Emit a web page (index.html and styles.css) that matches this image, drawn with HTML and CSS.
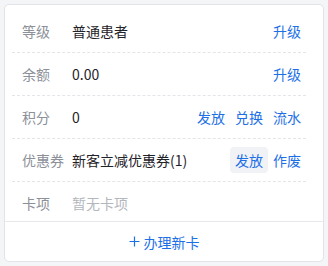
FILE: index.html
```html
<!DOCTYPE html>
<html lang="zh-CN">
<head>
    <meta charset="UTF-8">
    <meta name="viewport" content="width=device-width, initial-scale=1.0">
    <title>会员卡</title>
    <link rel="stylesheet" href="styles.css">
</head>
<body>
    <div class="card">
        <div class="list">
            <div class="row">
                <span class="label">等级</span>
                <span class="value">普通患者</span>
                <div class="actions">
                    <a class="link">升级</a>
                </div>
            </div>
            <div class="row">
                <span class="label">余额</span>
                <span class="value">0.00</span>
                <div class="actions">
                    <a class="link">升级</a>
                </div>
            </div>
            <div class="row">
                <span class="label">积分</span>
                <span class="value">0</span>
                <div class="actions">
                    <a class="link">发放</a>
                    <a class="link">兑换</a>
                    <a class="link">流水</a>
                </div>
            </div>
            <div class="row">
                <span class="label">优惠券</span>
                <span class="value">新客立减优惠券(1)</span>
                <div class="actions">
                    <a class="link active">发放</a>
                    <a class="link">作废</a>
                </div>
            </div>
            <div class="row row-last">
                <span class="label">卡项</span>
                <span class="value empty">暂无卡项</span>
            </div>
        </div>
        <div class="footer">
            <a class="link add">
                <svg width="11" height="11" viewBox="0 0 11 11"><path d="M5.5 0.5v10M0.5 5.5h10" stroke="currentColor" stroke-width="1.2" fill="none"/></svg>
                办理新卡
            </a>
        </div>
    </div>
</body>
</html>
```

FILE: styles.css
```css
body {
    margin: 0;
    padding: 4px;
    background-color: #f4f5f7;
    font-family: "Noto Sans CJK SC", "Noto Sans", sans-serif;
    font-size: 14px;
    color: #1f2329;
}
.card {
    width: 320px;
    height: 258px;
    box-sizing: border-box;
    background: white;
    border: 1px solid #e2e4e9;
    border-radius: 5px;
    display: flex;
    flex-direction: column;
}
.list {
    padding: 5px 17px 0 7px;
    flex: 1;
}
.row {
    display: flex;
    align-items: center;
    height: 43px;
    box-sizing: border-box;
    padding-left: 10px;
    border-bottom: 1px dashed #e3e5e9;
}
.row-last {
    border-bottom: none;
    height: 39px;
    padding-top: 2px;
}
.label {
    width: 50px;
    color: #8c9099;
}
.value {
    flex: 1;
}
.empty {
    color: #b3b7be;
}
.actions {
    display: flex;
}
.link {
    color: #1d6fe6;
    cursor: pointer;
    padding: 0 5px;
    line-height: 26px;
    border-radius: 4px;
}
.link.active {
    background-color: #f0f2f5;
}
.footer {
    height: 40px;
    border-top: 1px solid #e6e8ec;
    display: flex;
    align-items: center;
    justify-content: center;
}
.add {
    display: flex;
    align-items: center;
    gap: 4px;
}
```
